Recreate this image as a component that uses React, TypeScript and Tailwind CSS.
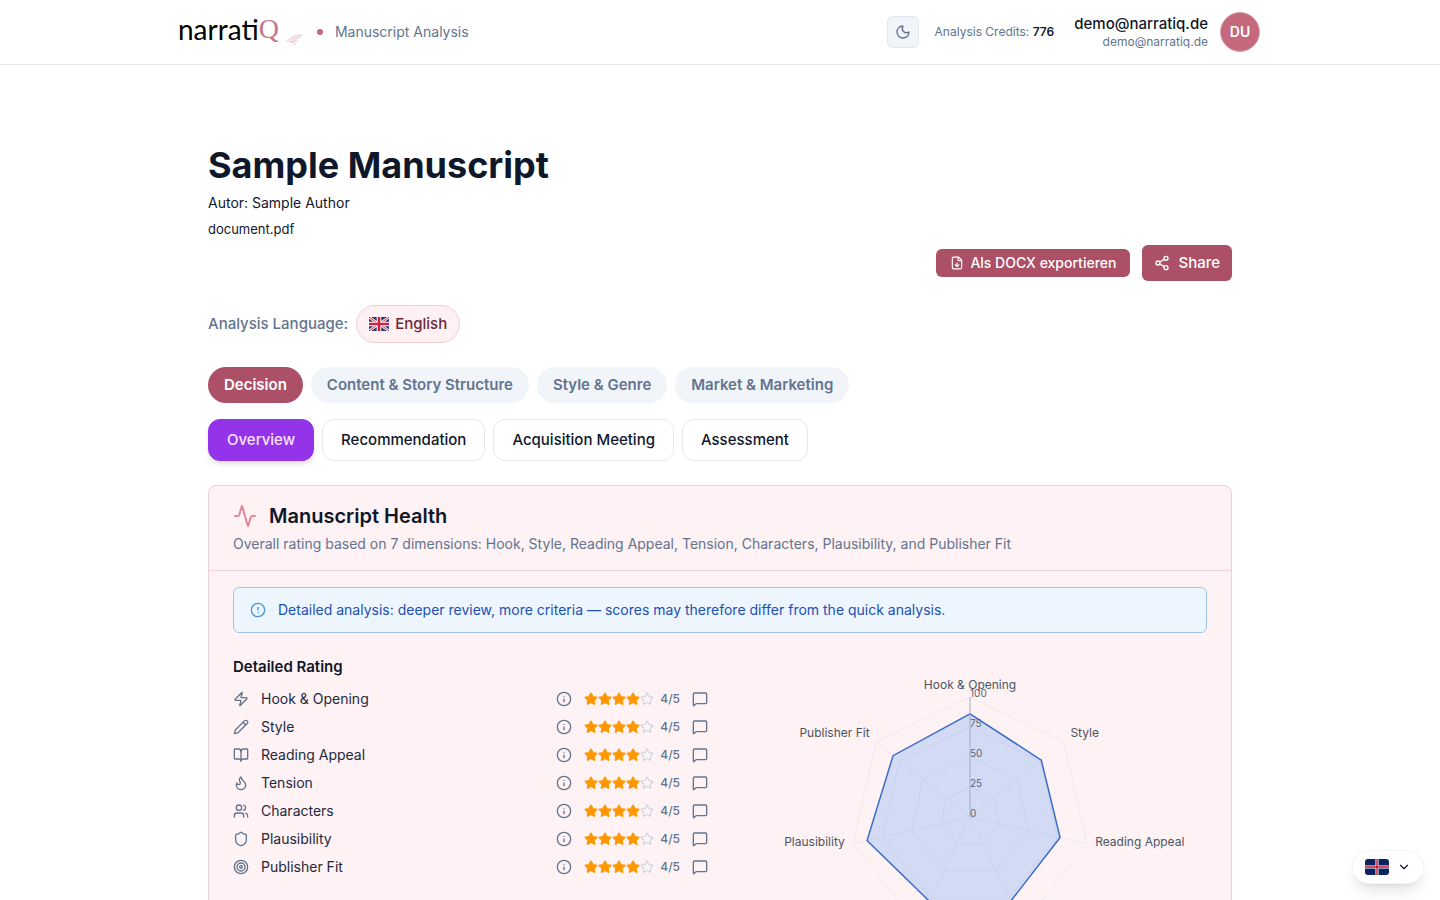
import {
  Activity,
  BookOpen,
  ChevronDown,
  CircleAlert,
  FileDown,
  Flame,
  Info,
  MessageSquare,
  Moon,
  Pencil,
  Share2,
  Shield,
  Star,
  Target,
  Users,
  Zap,
} from "lucide-react";

const ratings = [
  { label: "Hook & Opening", icon: Zap, stars: 4, score: 86 },
  { label: "Style", icon: Pencil, stars: 4, score: 76 },
  { label: "Reading Appeal", icon: BookOpen, stars: 4, score: 77 },
  { label: "Tension", icon: Flame, stars: 4, score: 78 },
  { label: "Characters", icon: Users, stars: 4, score: 78 },
  { label: "Plausibility", icon: Shield, stars: 4, score: 88 },
  { label: "Publisher Fit", icon: Target, stars: 4, score: 82 },
];

const sections = ["Decision", "Content & Story Structure", "Style & Genre", "Market & Marketing"];
const views = ["Overview", "Recommendation", "Acquisition Meeting", "Assessment"];

const Logo = () => (
  <a href="#" aria-label="narratiQ" className="flex items-center pb-1.5">
    <span className="font-['Lato'] text-[28px] leading-8 text-black">narrati</span>
    <span className="font-['Liberation_Serif'] text-[28px] leading-8 text-[#c9748a]">Q</span>
    <svg width="24" height="16" viewBox="0 0 24 16" className="mt-5 ml-0.5" aria-hidden="true">
      <path d="M4 10C8 9 10 5 14 4c3-1 5 0 8-1-2 3-4 5-7 6 1 0 2 1 3 0-3 3-6 3-9 2-2 0-3 0-5-1Z" fill="#f0dde1" />
      <path d="M1 11c6 0 11-2 15-6" fill="none" stroke="#fbf3f5" />
      <path d="M9 11c3 0 4 1 6 3" fill="none" stroke="#e7cbd2" />
    </svg>
  </a>
);

const UnionJack = () => (
  <svg width="20" height="14" viewBox="0 0 60 42" aria-hidden="true">
    <rect width="60" height="42" rx="3" fill="#29337a" />
    <path d="M2 2l56 38M58 2L2 40" stroke="#fff" strokeWidth="8" />
    <path d="M2 2l56 38M58 2L2 40" stroke="#d4213d" strokeWidth="3" />
    <path d="M30 0v42M0 21h60" stroke="#fff" strokeWidth="14" />
    <path d="M30 0v42M0 21h60" stroke="#d4213d" strokeWidth="8" />
  </svg>
);

const CrossFlag = () => (
  <svg width="24" height="16" viewBox="0 0 24 16" aria-hidden="true">
    <rect width="24" height="16" rx="3" fill="#0b2461" />
    <path d="M12 0v16M0 8h24" stroke="#fff" strokeWidth="3" />
    <path d="M12 0v16M0 8h24" stroke="#c8102e" strokeWidth="1.4" />
  </svg>
);

const Header = () => (
  <header className="border-b border-gray-200 bg-white">
    <div className="mx-auto flex h-16 max-w-[1088px] items-center justify-between">
      <div className="flex items-center pl-0.5">
        <Logo />
        <span className="mx-3 size-1.5 rounded-full bg-[#c4687c]" />
        <span className="text-sm text-slate-500">Manuscript Analysis</span>
      </div>
      <div className="flex items-center">
        <button
          aria-label="Toggle theme"
          className="flex size-8 items-center justify-center rounded-md border border-slate-200 bg-slate-100 text-slate-500"
        >
          <Moon size={16} />
        </button>
        <p className="ml-4 text-xs text-slate-500">
          Analysis Credits: <span className="font-semibold text-slate-900">776</span>
        </p>
        <button className="ml-4 flex items-center gap-3 p-1">
          <span className="flex flex-col text-right">
            <span className="text-[15px] leading-5 font-medium text-slate-900">demo@narratiq.de</span>
            <span className="text-xs text-slate-500">demo@narratiq.de</span>
          </span>
          <span className="flex size-10 items-center justify-center rounded-full border border-[#d9a3af] bg-[#c4687c] text-sm font-semibold text-white">
            DU
          </span>
        </button>
      </div>
    </div>
  </header>
);

const CX = 220;
const CY = 160;
const R = 120;

const point = (i: number, value: number) => {
  const angle = (2 * Math.PI * i) / ratings.length;
  const r = (R * value) / 100;
  return [CX + r * Math.sin(angle), CY - r * Math.cos(angle)];
};

const polygon = (values: number[]) => values.map((v, i) => point(i, v).join(",")).join(" ");

const RadarChart = () => (
  <svg width="440" height="320" viewBox="0 0 440 320" role="img" aria-label="Manuscript rating chart">
    <g fill="none" stroke="#f0e9ed">
      {[25, 50, 75, 100].map((level) => (
        <polygon key={level} points={polygon(ratings.map(() => level))} />
      ))}
      {ratings.map((r, i) => (
        <line key={r.label} x1={CX} y1={CY} x2={point(i, 100)[0]} y2={point(i, 100)[1]} />
      ))}
    </g>
    <polygon
      points={polygon(ratings.map((r) => r.score))}
      fill="#3b82f6"
      fillOpacity="0.22"
      stroke="#3b6cc9"
      strokeWidth="1.5"
    />
    <line x1={CX} y1={CY} x2={CX} y2={CY - R} stroke="#a9b0c4" />
    <g fontSize="10" fill="#5b6478">
      {[0, 25, 50, 75, 100].map((level) => (
        <text key={level} x={CX} y={CY - (R * level) / 100}>
          {level}
        </text>
      ))}
    </g>
    <g fontSize="12" fill="#4b5563">
      {ratings.map((r, i) => {
        const [x, y] = point(i, 107);
        const anchor = i === 0 ? "middle" : x > CX ? "start" : "end";
        return (
          <text key={r.label} x={x} y={y} textAnchor={anchor}>
            {r.label}
          </text>
        );
      })}
    </g>
  </svg>
);

const RatingRow = ({ label, icon: Icon, stars }: (typeof ratings)[number]) => (
  <li className="flex h-5 items-center">
    <Icon size={16} className="text-slate-500" />
    <span className="ml-3 flex-1 text-sm text-slate-800">{label}</span>
    <button aria-label={`About ${label}`} className="text-slate-500">
      <Info size={16} />
    </button>
    <span className="ml-3 flex">
      {[1, 2, 3, 4, 5].map((n) => (
        <Star
          key={n}
          size={14}
          className={n <= stars ? "fill-[#ff9800] text-[#ff9800]" : "text-slate-300"}
        />
      ))}
    </span>
    <span className="ml-1.5 text-xs font-medium text-slate-500">{stars}/5</span>
    <button aria-label={`Comment on ${label}`} className="ml-3 text-slate-500">
      <MessageSquare size={16} />
    </button>
  </li>
);

const HealthCard = () => (
  <section className="mt-6 rounded-lg border border-[#eccfd6] bg-[#fef2f4]">
    <div className="border-b border-[#f0d3da] px-6 pt-4 pb-4">
      <h2 className="flex items-center gap-3 text-xl font-semibold text-slate-900">
        <Activity size={24} className="text-[#dc8a9c]" />
        Manuscript Health
      </h2>
      <p className="mt-1 text-sm text-slate-500">
        Overall rating based on 7 dimensions: Hook, Style, Reading Appeal, Tension, Characters, Plausibility, and
        Publisher Fit
      </p>
    </div>
    <div className="px-6 pt-4 pb-6">
      <div className="flex items-center gap-3 rounded-md border border-[#9fc6e6] bg-[#edf6ff] px-4 py-3 text-sm text-[#1e4fb5]">
        <CircleAlert size={16} className="text-[#4a97dc]" />
        Detailed analysis: deeper review, more criteria — scores may therefore differ from the quick analysis.
      </div>
      <div className="mt-6 grid grid-cols-2 gap-6">
        <div>
          <h3 className="text-[15px] leading-5 font-semibold text-slate-900">Detailed Rating</h3>
          <ul className="mt-3 flex flex-col gap-2">
            {ratings.map((rating) => (
              <RatingRow key={rating.label} {...rating} />
            ))}
          </ul>
        </div>
        <div className="flex justify-center">
          <RadarChart />
        </div>
      </div>
    </div>
  </section>
);

const App = () => {
  return (
    <div className="min-h-screen bg-white font-['Inter',sans-serif] text-slate-900">
      <Header />
      <main className="mx-auto max-w-5xl pt-20 pb-16">
        <h1 className="text-4xl font-bold">Sample Manuscript</h1>
        <p className="mt-2 text-sm">Autor: Sample Author</p>
        <p className="mt-2 text-[13px] leading-4">document.pdf</p>
        <div className="mt-2 flex items-center justify-end gap-3 font-medium text-white">
          <button className="flex h-7 items-center gap-1.5 rounded-md bg-[#ab5067] px-3.5 text-sm">
            <FileDown size={14} />
            Als DOCX exportieren
          </button>
          <button className="flex h-9 items-center gap-2 rounded-md bg-[#ab5067] px-3 text-[15px] leading-5">
            <Share2 size={16} />
            Share
          </button>
        </div>
        <div className="mt-6 flex items-center gap-2 text-[15px] leading-5 font-medium">
          <span className="text-slate-500">Analysis Language:</span>
          <button className="flex items-center gap-1.5 rounded-full border border-[#f5cdd5] bg-[#fff1f3] px-3 py-2 text-[#6b2a3c]">
            <UnionJack />
            English
          </button>
        </div>
        <nav className="mt-6 flex gap-2 text-[15px] leading-5 font-semibold">
          {sections.map((name, i) => (
            <button
              key={name}
              className={`rounded-full px-4 py-2 ${i === 0 ? "bg-[#ab5067] text-white" : "bg-slate-100 text-slate-500"}`}
            >
              {name}
            </button>
          ))}
        </nav>
        <nav className="mt-4 flex gap-2 text-[15px] leading-5 font-medium">
          {views.map((name, i) => (
            <button
              key={name}
              className={`rounded-xl border px-[18px] py-2.5 ${
                i === 0 ? "border-[#9333ea] bg-[#9333ea] text-[#fbe4ff] shadow-md" : "border-gray-200 bg-white"
              }`}
            >
              {name}
            </button>
          ))}
        </nav>
        <HealthCard />
      </main>
      <button
        aria-label="Change language"
        className="fixed right-4 bottom-4 flex items-center gap-2 rounded-full border border-gray-100 bg-white px-3 py-2 shadow-lg"
      >
        <CrossFlag />
        <ChevronDown size={14} />
      </button>
    </div>
  );
};

export default App;
